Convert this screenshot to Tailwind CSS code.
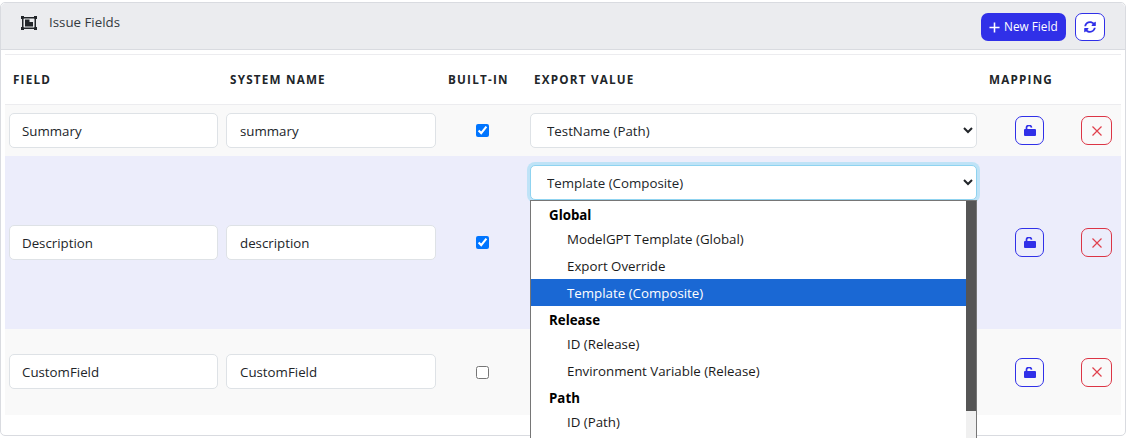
<!DOCTYPE html>
<html lang="en">
<head>
  <meta charset="UTF-8" />
  <title>Issue Fields</title>
  <script src="https://cdn.jsdelivr.net/npm/@tailwindcss/browser@4"></script>
</head>
<body class="bg-white h-[438px] overflow-hidden font-['Open_Sans','Noto_Sans',sans-serif] text-[13.3px] text-[#212529]">
  <main class="relative mt-[2px] w-[1126px] h-[434px] border border-[#d9dbe0] rounded-[5px] bg-white">

    <!-- Card header -->
    <header class="flex items-start justify-between h-[47px] bg-[#ebecef] border-b border-[#d9dbe0] rounded-t-[5px] pl-[20px] pr-[20px]">
      <div class="flex items-center gap-[12px] mt-[10px]">
        <svg class="w-[16px] h-[14px] text-[#212529]" viewBox="0 0 16 14" fill="currentColor">
          <path d="M0 0h3v1h10V0h3v3h-1v8h1v3h-3v-1H3v1H0v-3h1V3H0V0zm3 2.500L2.500 3v8l.5.500h10l.5-.500V3l-.5-.500H3z"/>
          <path d="M4 3.500h4.500v2.500H12v4.500H4z"/>
        </svg>
        <span class="text-[#343a40]">Issue Fields</span>
      </div>
      <div class="flex items-center gap-[9px] mt-[10px]">
        <button class="flex items-center gap-[4px] w-[85px] h-[28px] pl-[8px] rounded-[7px] bg-[#3030e8] text-white text-[11.8px]">
          <svg class="w-[11px] h-[11px]" viewBox="0 0 12 12" fill="none" stroke="currentColor" stroke-width="1.700"><path d="M6 .5v11M.5 6h11"/></svg>
          New Field
        </button>
        <button class="flex items-center justify-center w-[30px] h-[28px] rounded-[7px] border border-[#3030e8] bg-white text-[#3030e8]">
          <svg class="w-[12px] h-[12px]" viewBox="0 0 512 512" fill="currentColor"><path d="M370.720 133.280C339.458 104.008 298.888 87.962 255.848 88c-77.458.068-144.328 53.178-162.791 126.850-1.344 5.363-6.122 9.150-11.651 9.150H24.103c-7.498 0-13.194-6.807-11.807-14.176C33.933 94.924 134.813 8 256 8c66.448 0 126.791 26.136 171.315 68.685L463.030 40.970C478.149 25.851 504 36.559 504 57.941V192c0 13.255-10.745 24-24 24H345.941c-21.382 0-32.090-25.851-16.971-40.971l41.750-41.749zM32 296h134.059c21.382 0 32.090 25.851 16.971 40.971l-41.750 41.750c31.262 29.273 71.835 45.319 114.876 45.280 77.418-.070 144.315-53.144 162.787-126.849 1.344-5.363 6.122-9.150 11.651-9.150h57.304c7.498 0 13.194 6.807 11.807 14.176C478.067 417.076 377.187 504 256 504c-66.448 0-126.791-26.136-171.315-68.685L48.970 471.030C33.851 486.149 8 475.441 8 454.059V320c0-13.255 10.745-24 24-24z"/></svg>
        </button>
      </div>
    </header>

    <!-- Table -->
    <div class="mx-[4px] mt-[4px] border-t border-[#ececef] w-[1116px]">
      <div class="grid grid-cols-[217px_218px_86px_455px_93px_47px] items-center h-[50px] text-[11.7px] font-bold tracking-[1.2px] text-[#212529] border-b border-[#ececef]">
        <div class="pl-[8px]">FIELD</div>
        <div class="pl-[8px]">SYSTEM NAME</div>
        <div class="pl-[8px]">BUILT-IN</div>
        <div class="pl-[8px]">EXPORT VALUE</div>
        <div class="pl-[8px]">MAPPING</div>
        <div></div>
      </div>

      <!-- Summary -->
      <div class="grid grid-cols-[217px_218px_86px_455px_93px_47px] items-center h-[51px] bg-[#f9f9f9]">
        <div class="pl-[4px] pr-[4px]"><input value="Summary" class="w-[209px] h-[35px] px-[12px] bg-white border border-[#dee2e6] rounded-[5px]"></div>
        <div class="pl-[4px]"><input value="summary" class="w-[210px] h-[35px] px-[13px] bg-white border border-[#dee2e6] rounded-[5px]"></div>
        <div class="flex justify-center pr-[2px]"><input type="checkbox" checked class="w-[13px] h-[13px]"></div>
        <div class="pl-[4px]">
          <select class="w-[447px] h-[35px] pl-[12px] pr-[0px] pt-[1px] bg-white border border-[#dee2e6] rounded-[5px]">
            <option>TestName (Path)</option>
          </select>
        </div>
        <div class="pl-[34px]">
          <button class="flex items-center justify-center w-[29px] h-[29px] rounded-[7px] border border-[#3030e8] text-[#3030e8]">
            <svg class="w-[12px] h-[11px]" viewBox="0 0 12 11" fill="currentColor"><path d="M1 4h10a1 1 0 0 1 1 1v5a1 1 0 0 1-1 1H1a1 1 0 0 1-1-1V5a1 1 0 0 1 1-1z"/><path d="M2.500 4.500V3a2.500 2.500 0 0 1 5-.4" fill="none" stroke="currentColor" stroke-width="1.700"/></svg>
          </button>
        </div>
        <div class="pl-[7px]">
          <button class="flex items-center justify-center w-[31px] h-[29px] rounded-[7px] border border-[#dc3545] text-[#e0404c]">
            <svg class="w-[10px] h-[10px]" viewBox="0 0 10 10" fill="none" stroke="currentColor" stroke-width="1.200"><path d="M.5.500l9 9M9.500.500l-9 9"/></svg>
          </button>
        </div>
      </div>

      <!-- Description -->
      <div class="grid grid-cols-[217px_218px_86px_455px_93px_47px] items-center h-[173px] bg-[#ecedfb]">
        <div class="pl-[4px] pr-[4px]"><input value="Description" class="w-[209px] h-[35px] px-[12px] bg-white border border-[#dee2e6] rounded-[5px]"></div>
        <div class="pl-[4px]"><input value="description" class="w-[210px] h-[35px] px-[13px] bg-white border border-[#dee2e6] rounded-[5px]"></div>
        <div class="flex justify-center pr-[2px]"><input type="checkbox" checked class="w-[13px] h-[13px]"></div>
        <div class="pl-[4px] self-start pt-[9px]">
          <select class="block w-[447px] h-[35px] pl-[12px] pt-[1px] bg-white border border-[#8fd3f0] rounded-[5px] ring-[3px] ring-[#bfe3f7]">
            <option>Template (Composite)</option>
          </select>
        </div>
        <div class="pl-[34px]">
          <button class="flex items-center justify-center w-[29px] h-[29px] rounded-[7px] border border-[#3030e8] text-[#3030e8]">
            <svg class="w-[12px] h-[11px]" viewBox="0 0 12 11" fill="currentColor"><path d="M1 4h10a1 1 0 0 1 1 1v5a1 1 0 0 1-1 1H1a1 1 0 0 1-1-1V5a1 1 0 0 1 1-1z"/><path d="M2.500 4.500V3a2.500 2.500 0 0 1 5-.4" fill="none" stroke="currentColor" stroke-width="1.700"/></svg>
          </button>
        </div>
        <div class="pl-[7px]">
          <button class="flex items-center justify-center w-[31px] h-[29px] rounded-[7px] border border-[#dc3545] text-[#e0404c]">
            <svg class="w-[10px] h-[10px]" viewBox="0 0 10 10" fill="none" stroke="currentColor" stroke-width="1.200"><path d="M.5.500l9 9M9.500.500l-9 9"/></svg>
          </button>
        </div>
      </div>

      <!-- CustomField -->
      <div class="grid grid-cols-[217px_218px_86px_455px_93px_47px] items-center h-[86px] bg-[#f9f9f9]">
        <div class="pl-[4px] pr-[4px] pb-[1px]"><input value="CustomField" class="w-[209px] h-[35px] px-[12px] bg-white border border-[#dee2e6] rounded-[5px]"></div>
        <div class="pl-[4px] pb-[1px]"><input value="CustomField" class="w-[210px] h-[35px] px-[13px] bg-white border border-[#dee2e6] rounded-[5px]"></div>
        <div class="flex justify-center pr-[2px]"><input type="checkbox" class="w-[13px] h-[13px]"></div>
        <div></div>
        <div class="pl-[34px]">
          <button class="flex items-center justify-center w-[29px] h-[29px] rounded-[7px] border border-[#3030e8] text-[#3030e8]">
            <svg class="w-[12px] h-[11px]" viewBox="0 0 12 11" fill="currentColor"><path d="M1 4h10a1 1 0 0 1 1 1v5a1 1 0 0 1-1 1H1a1 1 0 0 1-1-1V5a1 1 0 0 1 1-1z"/><path d="M2.500 4.500V3a2.500 2.500 0 0 1 5-.4" fill="none" stroke="currentColor" stroke-width="1.700"/></svg>
          </button>
        </div>
        <div class="pl-[7px]">
          <button class="flex items-center justify-center w-[31px] h-[29px] rounded-[7px] border border-[#dc3545] text-[#e0404c]">
            <svg class="w-[10px] h-[10px]" viewBox="0 0 10 10" fill="none" stroke="currentColor" stroke-width="1.200"><path d="M.5.500l9 9M9.500.500l-9 9"/></svg>
          </button>
        </div>
      </div>
    </div>

    <!-- Open select list -->
    <div class="absolute left-[529px] top-[197px] w-[447px] h-[240px] bg-white border border-[#767676] flex text-[#1a1a1a]">
      <div class="flex-1">
        <div class="h-[24px] pl-[18px] pt-[5px] flex items-center font-bold text-black">Global</div>
        <div class="h-[27px] pl-[36px] pt-[3px] flex items-center">ModelGPT Template (Global)</div>
        <div class="h-[27px] pl-[36px] pt-[3px] flex items-center">Export Override</div>
        <div class="h-[27px] pl-[36px] pt-[3px] flex items-center bg-[#1a68d4] text-white">Template (Composite)</div>
        <div class="h-[24px] pl-[18px] pt-[5px] flex items-center font-bold text-black">Release</div>
        <div class="h-[27px] pl-[36px] pt-[3px] flex items-center">ID (Release)</div>
        <div class="h-[27px] pl-[36px] pt-[3px] flex items-center">Environment Variable (Release)</div>
        <div class="h-[24px] pl-[18px] pt-[5px] flex items-center font-bold text-black">Path</div>
        <div class="h-[27px] pl-[36px] pt-[3px] flex items-center">ID (Path)</div>
      </div>
      <div class="w-[10px] bg-[#f0f0f0]"><div class="h-[210px] bg-[#555555]"></div></div>
    </div>
  </main>
</body>
</html>
